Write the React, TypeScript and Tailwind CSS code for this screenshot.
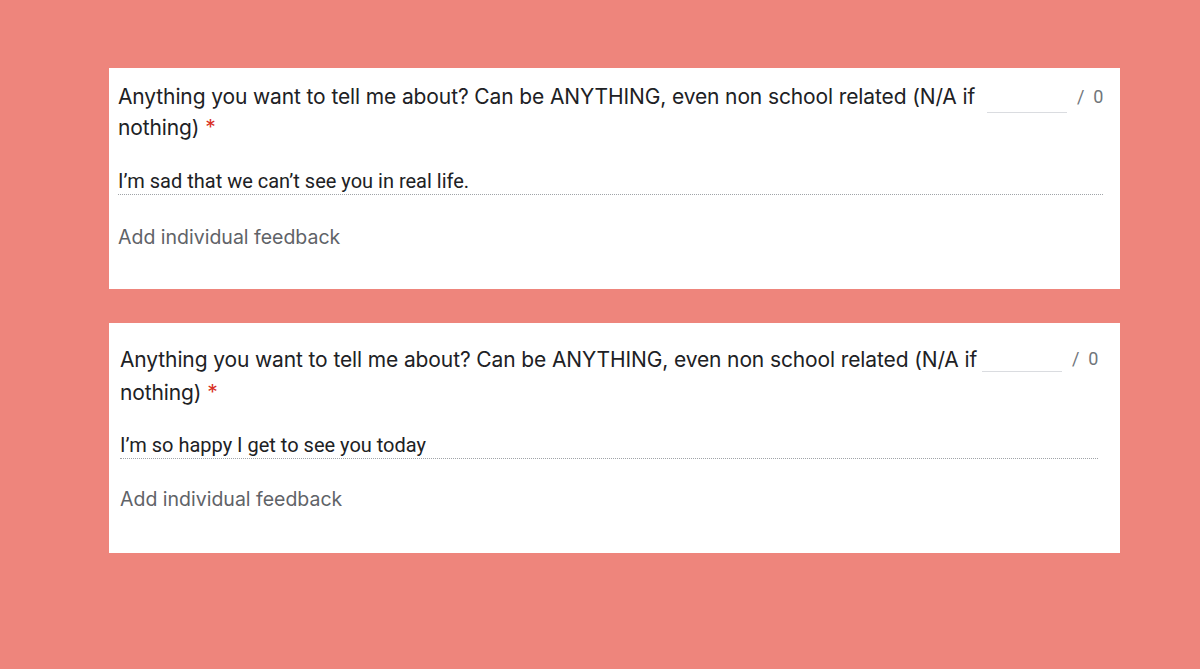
const cards = [
  {
    answer: "I\u2019m sad that we can\u2019t see you in real life.",
    wrap: "mt-[68px] h-[221px] pl-[9px] pr-[17px] pt-[13px]",
    title: "leading-[31px]",
    answerGap: "mt-[25px]",
    feedbackGap: "mt-[28px]",
    boxTop: "mt-[1px]",
  },
  {
    answer: "I\u2019m so happy I get to see you today",
    wrap: "mt-[34px] h-[230px] pl-[11px] pr-[22px] pt-[20px]",
    title: "leading-[33px]",
    answerGap: "mt-[23px]",
    feedbackGap: "mt-[26px]",
    boxTop: "-mt-[2px]",
  },
];

type Card = (typeof cards)[number];

function ResponseCard({ card }: { card: Card }) {
  return (
    <div className={`ml-[109px] w-[1011px] bg-white ${card.wrap}`}>
      <div className="flex items-start">
        <p
          className={`min-w-0 flex-1 text-[21px] tracking-[-0.12px] text-[#202124] font-['Inter',sans-serif] ${card.title}`}
        >
          Anything you want to tell me about? Can be ANYTHING, even non school related (N/A if nothing){"\u00a0"}
          <span className="text-[#d93025]">*</span>
        </p>
        <div className={`h-[31px] w-[80px] shrink-0 border-b border-[#dadce0] ${card.boxTop}`} />
        <span className="ml-[10px] w-[26px] shrink-0 whitespace-pre text-[18px] leading-[31px] text-[#70757a] font-['Roboto',sans-serif]">
          {"/  0"}
        </span>
      </div>
      <div
        className={`border-b border-dotted border-[#a0a4a8] text-[20px] leading-[26px] text-[#202124] font-['Roboto',sans-serif] ${card.answerGap}`}
      >
        {card.answer}
      </div>
      <div className={`text-[19.5px] leading-[29px] text-[#5f6368] font-['Inter',sans-serif] ${card.feedbackGap}`}>
        Add individual feedback
      </div>
    </div>
  );
}

export default function App() {
  return (
    <div className="h-[669px] w-[1200px] overflow-hidden bg-[#ee857c]">
      {cards.map((c) => (
        <ResponseCard key={c.answer} card={c} />
      ))}
    </div>
  );
}
